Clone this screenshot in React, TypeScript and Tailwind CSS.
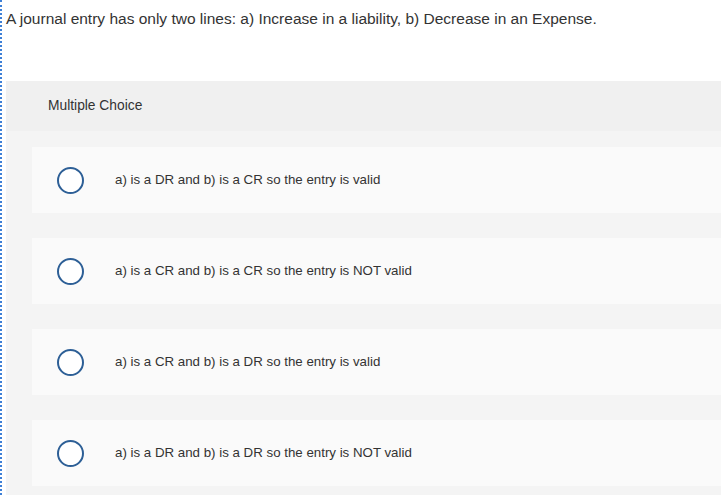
import React from 'react';

const options = [
  'a) is a DR and b) is a CR so the entry is valid',
  'a) is a CR and b) is a CR so the entry is NOT valid',
  'a) is a CR and b) is a DR so the entry is valid',
  'a) is a DR and b) is a DR so the entry is NOT valid',
];

export default function App() {
  return (
    <div className="h-[495px] w-[721px] overflow-hidden bg-white border-l-2 border-dotted border-[#3d7fd6] font-['Liberation_Sans',sans-serif]">
      {/* Question stem */}
      <div className="h-[81px] pl-[4px] pt-[10px] text-[15.5px] leading-[18px] text-[#333]">
        A journal entry has only two lines: a) Increase in a liability, b) Decrease in an Expense.
      </div>

      <div className="ml-[4px]">
        {/* Header */}
        <div className="flex h-[50px] items-center bg-[#f0f0f0] pl-[42px] text-[13.8px] text-[#333]">
          Multiple Choice
        </div>

        {/* Options */}
        <div className="flex flex-col gap-[25px] bg-[#f4f4f4] pb-[10px] pl-[26px] pt-[16px]">
          {options.map((text, i) => (
            <div key={i} className="flex h-[66px] items-center bg-[#fafafa] pl-[25px]">
              <span className="h-[27px] w-[27px] shrink-0 rounded-full border-2 border-[#2d5f96] bg-white" />
              <span className="ml-[31px] text-[13.3px] text-[#333]">{text}</span>
            </div>
          ))}
        </div>
      </div>
    </div>
  );
}
